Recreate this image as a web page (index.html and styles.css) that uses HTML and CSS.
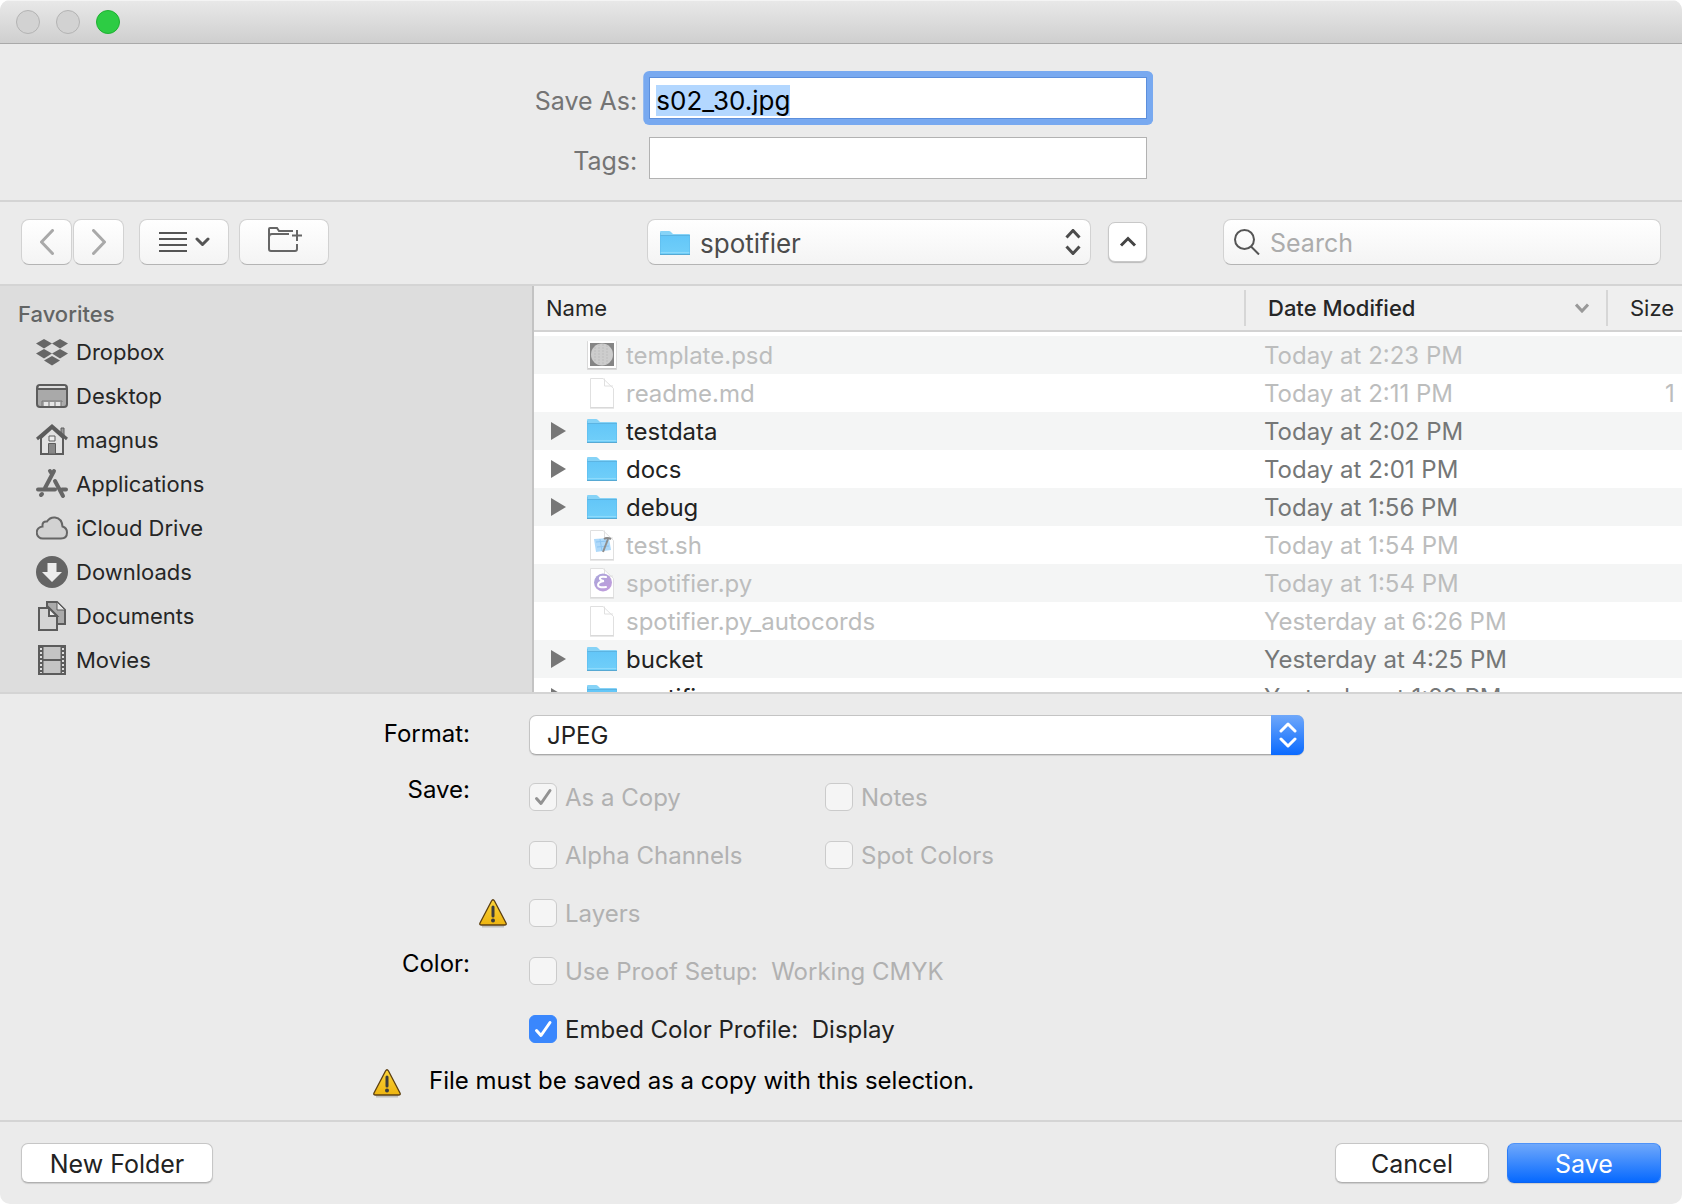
FILE: index.html
```html
<!DOCTYPE html>
<html lang="en">
<head>
<meta charset="utf-8">
<title>Save As</title>
<link rel="stylesheet" href="styles.css">
</head>
<body>
<svg class="sprite" aria-hidden="true">
  <defs>
    <linearGradient id="folder-fill" x1="0" y1="0" x2="0" y2="1"><stop offset="0" stop-color="#63c6f8"/><stop offset="1" stop-color="#71cff9"/></linearGradient>
    <linearGradient id="warn-fill" x1="0" y1="0" x2="0" y2="1"><stop offset="0" stop-color="#fbd43a"/><stop offset="1" stop-color="#edb410"/></linearGradient>
    <linearGradient id="emacs-fill" x1="0" y1="0" x2="1" y2="1"><stop offset="0" stop-color="#a9a6da"/><stop offset="1" stop-color="#c39bdc"/></linearGradient>
  </defs>
  <symbol id="folder" viewBox="0 0 32 32">
    <path d="M1 27V5q0-1 1-1h8q1 0 2 1l2 2h16q1 0 1 1v19z" fill="#86d3f7"/>
    <path d="M1 8.500h30V27q0 1-1 1H2q-1 0-1-1z" fill="url(#folder-fill)"/>
    <path d="M1 8.500h30" stroke="#5cb4e2"/><path d="M1 25.500h30" stroke="#8ddafb"/><path d="M1 27.500h30" stroke="#57a9d3"/>
    <path d="M1.500 6v21M30.500 9v18" stroke="#5fbdec" stroke-opacity=".6"/>
  </symbol>
  <symbol id="doc" viewBox="0 0 32 32">
    <path d="M4.500 1.500H17l10.500 10V30.500h-23z" fill="#fff" stroke="#e0e0e0"/>
    <path d="M18.500 1.500v7.500h8.500" fill="none" stroke="#e0e0e0"/>
    <path d="M4 31h24" stroke="#d2d2d2"/>
  </symbol>
  <symbol id="psd" viewBox="0 0 32 32">
    <path d="M1.500 2.500h29v28h-29z" fill="#ccc" stroke="#d9d9d9"/><path d="M2 2h28v27H2z" fill="#fff"/><path d="M4 4h24v23H4z" fill="#858585"/>
    <circle cx="16" cy="15.500" r="11" fill="#cdcdcd"/>
    <path d="M9 8v15M13 5v21M17 5v21M21 6v19" stroke="#bdbdbd" stroke-dasharray="2 1"/>
  </symbol>
  <symbol id="shell" viewBox="0 0 32 32">
    <use href="#doc"/>
    <path d="M8 10l15-1 2 12-15 2z" fill="#aed9fa"/><path d="M10 13l12-1M11 18l12-1M14 10l2 12" stroke="#8cc5f3" fill="none"/>
    <path d="M22 10l-5 13" stroke="#8e8e8e" stroke-width="2"/><path d="M18 10q3-2 7 0" stroke="#888" stroke-width="2" fill="none"/>
  </symbol>
  <symbol id="emacs" viewBox="0 0 32 32">
    <use href="#doc"/>
    <circle cx="17" cy="15.500" r="9" fill="url(#emacs-fill)"/>
    <path d="M20 10q-7-1-6 2 1 2 4 2-6 1-6 4 0 3 8 2" fill="none" stroke="#fff" stroke-width="2" stroke-linecap="round"/>
  </symbol>
  <symbol id="warning" viewBox="0 0 28 30">
    <path d="M3 28.500h22" stroke="#000" stroke-opacity=".18" stroke-width="2"/>
    <path d="M12.500 3q1.500-2.500 3 0L27 25q.8 2-1.500 2h-23q-2.300 0-1.500-2z" fill="url(#warn-fill)" stroke="#5c3f10" stroke-width="1.300"/>
    <path d="M14 9v9" stroke="#3c3c3c" stroke-width="3" stroke-linecap="round"/><circle cx="14" cy="22.500" r="2" fill="#3c3c3c"/>
  </symbol>
</svg>

<header class="titlebar">
  <button class="light" aria-label="Close" disabled></button>
  <button class="light" aria-label="Minimize" disabled></button>
  <button class="light light-zoom" aria-label="Zoom"></button>
</header>

<section class="naming">
  <label for="filename">Save As:</label>
  <input id="filename" class="field field-focus" type="text" value="s02_30.jpg" autofocus>
  <label for="tags">Tags:</label>
  <input id="tags" class="field" type="text">
</section>

<nav class="toolbar">
  <div class="tools">
    <div class="history">
      <button class="tool tool-nav" aria-label="Back"><svg width="14" height="26" viewBox="0 0 14 26"><path d="M12.500 1.500L1.500 13l11 11.500"/></svg></button>
      <button class="tool tool-nav" aria-label="Forward"><svg width="14" height="26" viewBox="0 0 14 26"><path d="M1.500 1.500L12.500 13l-11 11.500"/></svg></button>
    </div>
    <button class="tool tool-wide" aria-label="View as list">
      <svg width="52" height="24" viewBox="0 0 52 24"><path d="M1 3h28M1 9h28M1 15h28M1 21h28" stroke-width="2"/><path d="M39 9l5.500 5.500L50 9" stroke-width="3" stroke-linecap="round" stroke-linejoin="round"/></svg>
    </button>
    <button class="tool tool-wide" aria-label="New folder">
      <svg class="new-folder" width="36" height="28" viewBox="0 0 36 28"><path d="M27 5H13l-2-3H4Q3 2 3 3v20q0 2 2 2h24q2 0 2-2v-5M3 11q0-3 3-3h17"/><path d="M31 4v11M26 9.500h10"/></svg>
    </button>
  </div>
  <div class="location">
    <div class="picker">
      <svg class="picker-folder" width="32" height="32"><use href="#folder"/></svg>
      <select class="picker-select" aria-label="Location"><option>spotifier</option></select>
      <svg class="picker-arrows" width="16" height="26" viewBox="0 0 16 26"><path d="M1.500 8.500L8 1.500l6.500 7M1.500 17.500L8 24.500l6.500-7"/></svg>
    </div>
    <button class="collapse" aria-label="Collapse"><svg width="18" height="12" viewBox="0 0 18 12"><path d="M2 9.500L9 2.500l7 7"/></svg></button>
  </div>
  <label class="search">
    <svg width="26" height="26" viewBox="0 0 26 26"><circle cx="10.500" cy="10.500" r="9.500"/><path d="M17 17.500l8 8"/></svg>
    <input type="search" placeholder="Search" aria-label="Search">
  </label>
</nav>

<main class="browser">
  <aside class="sidebar">
    <h2>Favorites</h2>
    <ul>
      <li><a href="#dropbox"><svg viewBox="0 0 32 32"><path d="M8 3l8 4.500-8 5-8-5zM24 3l8 4.500-8 5-8-5zM8 13l8 4.500-8 5-8-5zM24 13l8 4.500-8 5-8-5zM16 20l8 4.500-8 5-8-5z" fill="#666"/></svg>Dropbox</a></li>
      <li><a href="#desktop"><svg viewBox="0 0 32 32"><rect x="1" y="5" width="30" height="22" rx="3" fill="#a9a9a9" stroke="#5c5c5c" stroke-width="2"/><path d="M3 7h26" stroke="#ddd" stroke-width="2"/><path d="M1 9h30" stroke="#5c5c5c" stroke-width="2"/><path d="M8 24h19" stroke="#e6e6e6" stroke-width="4" stroke-dasharray="4 2"/><path d="M6 26v-5h20v5" fill="none" stroke="#777"/></svg>Desktop</a></li>
      <li><a href="#home"><svg viewBox="0 0 32 32"><path d="M25 9V4h3v8" fill="#999" stroke="#5c5c5c"/><path d="M5 14v16h22V14L16 4z" fill="#e2e2e2" stroke="#5c5c5c" stroke-width="2"/><path d="M1 15L16 2l15 13" fill="none" stroke="#5c5c5c" stroke-width="3"/><path d="M13 12h6v5h-6z" fill="#eee" stroke="#5c5c5c"/><path d="M12.500 19.500h7V30h-7z" fill="#888" stroke="#5c5c5c"/></svg>magnus</a></li>
      <li><a href="#applications"><svg viewBox="0 0 32 32"><g fill="none" stroke="#666" stroke-width="4" stroke-linecap="round"><path d="M18 3l-9 17M2 21.500h17M26 21.500h4M14 3l2 3M19 13l8 15M5 27l1-1"/></g></svg>Applications</a></li>
      <li><a href="#icloud"><svg viewBox="0 0 32 32"><path d="M7 26.500a6 6 0 0 1-.5-12Q6 9 11 9.500 14 5 19 5.500q7 1 7.500 9 4.500 1.500 4.500 6 0 6-6 6z" fill="#d2d2d2" stroke="#666" stroke-width="2"/></svg>iCloud Drive</a></li>
      <li><a href="#downloads"><svg viewBox="0 0 32 32"><circle cx="16" cy="16" r="16" fill="#646464"/><path d="M11.500 7h9v9H26L16 26 6 16h5.500z" fill="#ececec"/></svg>Downloads</a></li>
      <li><a href="#documents"><svg viewBox="0 0 32 32"><path d="M11 2h10l8 8v14H11z" fill="#aaa" stroke="#5c5c5c" stroke-width="2"/><path d="M21 2v8h8z" fill="#e6e6e6" stroke="#5c5c5c" stroke-width="1"/><path d="M3 8h10l8 8v14H3z" fill="#d4d4d4" stroke="#5c5c5c" stroke-width="2"/><path d="M13 8v8h8z" fill="#eee" stroke="#5c5c5c" stroke-width="2"/></svg>Documents</a></li>
      <li><a href="#movies"><svg viewBox="0 0 32 32"><path d="M3 2h26v28H3z" fill="#c4c4c4" stroke="#5c5c5c" stroke-width="2"/><path d="M5 3v26M27 3v26" stroke="#5c5c5c" stroke-width="5"/><path d="M5 4v25M27 4v25" stroke="#ddd" stroke-width="2" stroke-dasharray="2 2"/><path d="M6 16h20" stroke="#5c5c5c" stroke-width="2"/></svg>Movies</a></li>
    </ul>
  </aside>
  <div class="files">
    <table>
      <colgroup><col class="col-name"><col class="col-date"><col class="col-size"></colgroup>
      <thead>
        <tr>
          <th scope="col"><span class="head">Name</span></th>
          <th scope="col" aria-sort="descending"><span class="head head-sorted">Date Modified<svg width="14" height="10" viewBox="0 0 14 10"><path d="M1 1.500l6 6.500 6-6.500"/></svg></span></th>
          <th scope="col"><span class="head">Size</span></th>
        </tr>
      </thead>
      <tbody>
        <tr class="dim"><td><div class="entry"><svg class="glyph"><use href="#psd"/></svg>template.psd</div></td><td>Today at 2:23 PM</td><td></td></tr>
        <tr class="dim"><td><div class="entry"><svg class="glyph"><use href="#doc"/></svg>readme.md</div></td><td>Today at 2:11 PM</td><td>1 118 bytes</td></tr>
        <tr><td><div class="entry"><button class="expand" aria-label="Expand testdata"></button><svg class="glyph"><use href="#folder"/></svg>testdata</div></td><td>Today at 2:02 PM</td><td></td></tr>
        <tr><td><div class="entry"><button class="expand" aria-label="Expand docs"></button><svg class="glyph"><use href="#folder"/></svg>docs</div></td><td>Today at 2:01 PM</td><td></td></tr>
        <tr><td><div class="entry"><button class="expand" aria-label="Expand debug"></button><svg class="glyph"><use href="#folder"/></svg>debug</div></td><td>Today at 1:56 PM</td><td></td></tr>
        <tr class="dim"><td><div class="entry"><svg class="glyph"><use href="#shell"/></svg>test.sh</div></td><td>Today at 1:54 PM</td><td>118 bytes</td></tr>
        <tr class="dim"><td><div class="entry"><svg class="glyph"><use href="#emacs"/></svg>spotifier.py</div></td><td>Today at 1:54 PM</td><td></td></tr>
        <tr class="dim"><td><div class="entry"><svg class="glyph"><use href="#doc"/></svg>spotifier.py_autocords</div></td><td>Yesterday at 6:26 PM</td><td></td></tr>
        <tr><td><div class="entry"><button class="expand" aria-label="Expand bucket"></button><svg class="glyph"><use href="#folder"/></svg>bucket</div></td><td>Yesterday at 4:25 PM</td><td></td></tr>
        <tr><td><div class="entry"><button class="expand" aria-label="Expand spotifier"></button><svg class="glyph"><use href="#folder"/></svg>spotifier</div></td><td>Yesterday at 1:28 PM</td><td></td></tr>
      </tbody>
    </table>
  </div>
</main>

<section class="options">
  <div class="option-row format-row">
    <label class="caption" for="format">Format:</label>
    <div class="format">
      <select id="format"><option>JPEG</option></select>
      <span class="format-arrows"><svg width="18" height="26" viewBox="0 0 18 26"><path d="M2 9l7-7 7 7M2 17l7 7 7-7"/></svg></span>
    </div>
  </div>
  <fieldset class="option-row">
    <legend class="caption">Save:</legend>
    <div class="checks">
      <label class="check"><input type="checkbox" checked disabled>As a Copy</label>
      <label class="check"><input type="checkbox" disabled>Notes</label>
      <label class="check"><input type="checkbox" disabled>Alpha Channels</label>
      <label class="check"><input type="checkbox" disabled>Spot Colors</label>
      <label class="check"><svg class="layers-warning" width="28" height="30"><use href="#warning"/></svg><input type="checkbox" disabled>Layers</label>
    </div>
  </fieldset>
  <fieldset class="option-row">
    <legend class="caption">Color:</legend>
    <div class="checks checks-single">
      <label class="check"><input type="checkbox" disabled>Use Proof Setup:&nbsp; Working CMYK</label>
      <label class="check"><input type="checkbox" checked>Embed Color Profile:&nbsp; Display</label>
    </div>
  </fieldset>
  <p class="notice"><svg width="28" height="30"><use href="#warning"/></svg>File must be saved as a copy with this selection.</p>
</section>

<footer class="actions">
  <button class="push push-new">New Folder</button>
  <button class="push">Cancel</button>
  <button class="push push-default">Save</button>
</footer>
<script>
  const filename = document.getElementById('filename');
  filename.focus();
  filename.select();
</script>
</body>
</html>
```
FILE: styles.css
```css
* { box-sizing: border-box; }

html { background: #fff; }

body {
  margin: 0;
  height: 100vh;
  display: flex;
  flex-direction: column;
  overflow: hidden;
  border-radius: 10px;
  background: #ebebeb;
  color: #000;
  font-family: Inter, "Liberation Sans", sans-serif;
  font-size: 24px;
}

button, input, select { font: inherit; margin: 0; color: inherit; }
button { padding: 0; }
svg { flex: none; fill: none; }
.sprite { position: absolute; width: 0; height: 0; }

/* Title bar */
.titlebar {
  flex: none;
  display: flex;
  align-items: center;
  gap: 16px;
  height: 44px;
  padding-left: 16px;
  background: linear-gradient(#e8e8e8, #cfcfcf);
  border-top: 1px solid #f4f4f4;
  border-bottom: 1px solid #a9a9a9;
}
.light {
  width: 24px;
  height: 24px;
  border: 1px solid #b3b3b3;
  border-radius: 50%;
  background: #d2d2d2;
}
.light-zoom { background: #2dcc44; border-color: #1fb032; }

/* File name and tags */
.naming {
  flex: none;
  display: grid;
  grid-template-columns: auto minmax(0, 498px);
  justify-content: center;
  align-items: center;
  column-gap: 12px;
  row-gap: 18px;
  padding: 33px 0 21px;
  border-bottom: 2px solid #d4d4d4;
}
.naming label {
  padding-top: 5px;
  text-align: right;
  color: #747474;
  font-size: 25px;
}
.field {
  width: 100%;
  height: 42px;
  padding: 4px 6px 0;
  border: 1px solid #b2b2b2;
  border-radius: 0;
  outline: 0;
  background: #fff;
  color: #000;
  font-size: 26px;
}
.field-focus {
  border-color: #5c8fdc;
  box-shadow: 0 0 0 6px #78a9f0;
  clip-path: inset(-6px round 6px);
}
.field::selection { background: #b3d7ff; color: #000; }

/* Toolbar */
.toolbar {
  flex: none;
  display: grid;
  grid-template-columns: minmax(0, 626fr) minmax(0, 500fr) minmax(0, 514fr);
  align-items: center;
  padding: 17px 21px 19px;
  border-bottom: 2px solid #d4d4d4;
}
.tools { display: flex; gap: 10px; }
.history { display: flex; gap: 1px; margin-right: 5px; }
.tool, .picker-select, .search {
  height: 46px;
  border: 1px solid #d2d2d2;
  border-bottom-color: #b4b4b4;
  border-radius: 8px;
  background: linear-gradient(#fff, #f4f4f4);
}
.tool {
  display: flex;
  align-items: center;
  justify-content: center;
}
.tool svg { stroke: #555; }
.tool-nav { width: 51px; }
.tool-nav svg { stroke: #a9a9a9; stroke-width: 3; stroke-linecap: round; stroke-linejoin: round; }
.tool-wide { width: 90px; }
.tool .new-folder { stroke: #666; stroke-width: 2; margin-bottom: 4px; }
.location { display: flex; align-items: center; gap: 17px; }
.picker { position: relative; flex: 1; }
.picker-select {
  appearance: none;
  display: block;
  width: 100%;
  padding: 2px 48px 0 52px;
  outline: 0;
  color: #4c4c4c;
  font-size: 26px;
}
.picker-folder { position: absolute; left: 12px; top: 8px; }
.picker-arrows { position: absolute; right: 10px; top: 10px; stroke: #4c4c4c; stroke-width: 3; }
.collapse {
  display: flex;
  align-items: center;
  justify-content: center;
  width: 39px;
  height: 40px;
  border: 1px solid #c8c8c8;
  border-radius: 7px;
  background: #fff;
  box-shadow: 0 1px 1px #bbb;
}
.collapse svg { stroke: #444; stroke-width: 3; }
.search {
  display: flex;
  align-items: center;
  gap: 10px;
  margin-left: 76px;
  padding: 0 10px;
}
.search svg { stroke: #555; stroke-width: 2; }
.search input {
  appearance: none;
  flex: 1;
  min-width: 0;
  padding: 2px 0 0;
  border: 0;
  outline: 0;
  background: none;
  font-size: 25px;
}
.search input::placeholder { color: #acacac; }

/* Sidebar */
.browser {
  flex: 1 1 0;
  min-height: 0;
  display: flex;
  border-bottom: 2px solid #d4d4d4;
}
.sidebar {
  flex: none;
  width: 534px;
  padding: 14px 0 0 18px;
  overflow: hidden;
  border-right: 2px solid #c3c3c3;
  background: #ddd;
}
.sidebar h2 {
  margin: 0 0 2px;
  color: #626464;
  font-size: 22px;
  font-weight: 500;
  line-height: 28px;
}
.sidebar ul { margin: 0; padding: 0; list-style: none; }
.sidebar a {
  display: flex;
  align-items: center;
  gap: 8px;
  height: 44px;
  padding-left: 18px;
  color: #262626;
  font-size: 22px;
  text-decoration: none;
}
.sidebar svg { width: 32px; height: 32px; }

/* File list: the table runs on past the right edge of its pane */
.files { flex: 1; min-width: 0; overflow: hidden; background: #fff; }
table {
  width: calc(100% + 136px);
  border-collapse: collapse;
  table-layout: fixed;
}
.col-date { width: 362px; }
.col-size { width: 212px; }
th {
  height: 45px;
  padding: 0;
  border-bottom: 2px solid #d2d2d2;
  background: #efefef;
  color: #262626;
  font-size: 22px;
  font-weight: 400;
  text-align: left;
}
.head {
  display: flex;
  align-items: center;
  height: 36px;
  padding-left: 12px;
}
th + th .head { padding-left: 22px; border-left: 2px solid #d6d6d6; }
.head.head-sorted { justify-content: space-between; padding-right: 17px; font-weight: 500; }
.head svg { stroke: #999; stroke-width: 3; }
tbody::before { content: ""; display: block; height: 4px; }
td {
  height: 38px;
  padding: 0;
  white-space: nowrap;
  color: #757777;
}
td:nth-child(2) { padding-left: 20px; }
td:nth-child(3) { padding-right: 33px; text-align: right; }
tbody tr:nth-child(odd) { background: #f4f5f5; }
.entry {
  display: flex;
  align-items: center;
  gap: 8px;
  height: 38px;
  padding-left: 52px;
  color: #222;
}
.entry:has(.expand) { padding-left: 17px; }
.expand {
  width: 15px;
  height: 18px;
  margin-right: 12px;
  border: 0;
  background: #777;
  clip-path: polygon(0 0, 100% 50%, 0 100%);
}
.glyph { width: 32px; height: 32px; }
.dim td, .dim .entry { color: #bcbdbd; }

/* Format and save options */
.options { flex: none; padding: 21px 0 22px; }
.option-row {
  display: flex;
  gap: 59px;
  align-items: flex-start;
  margin: 0;
  padding: 0;
  border: 0;
}
.caption {
  flex: none;
  width: 470px;
  padding: 0;
  text-align: right;
  line-height: 44px;
}
legend.caption { float: left; }
.format-row { margin-bottom: 13px; }
.format-row .caption { line-height: 38px; }
.format { position: relative; flex: 0 1 775px; }
.format select {
  appearance: none;
  display: block;
  width: 100%;
  height: 40px;
  padding: 0 50px 0 17px;
  border: 1px solid #c4c4c4;
  border-bottom-color: #aaa;
  border-radius: 7px;
  outline: 0;
  background: #fff;
  box-shadow: 0 1px 1px #d0d0d0;
  color: #222;
}
.format-arrows {
  position: absolute;
  top: 0;
  right: 0;
  display: flex;
  align-items: center;
  justify-content: center;
  width: 33px;
  height: 40px;
  border-radius: 0 7px 7px 0;
  background: linear-gradient(#6fa8fa, #0a6aff);
  pointer-events: none;
}
.format-arrows svg { stroke: #fff; stroke-width: 3; stroke-linecap: round; stroke-linejoin: round; }
.checks {
  display: grid;
  grid-template-columns: 296px auto;
}
.checks-single { grid-template-columns: auto; }
.check {
  position: relative;
  display: flex;
  align-items: center;
  gap: 8px;
  height: 58px;
  color: #222;
}
.check:has(:disabled) { color: #b1b1b1; }
.check input {
  appearance: none;
  flex: none;
  width: 28px;
  height: 28px;
  border: 1px solid #cbcbcb;
  border-radius: 6px;
  background: #f5f5f5 center / 28px 28px no-repeat;
}
.check input:checked { background-image: url("data:image/svg+xml,%3Csvg xmlns='http://www.w3.org/2000/svg' viewBox='0 0 28 28'%3E%3Cpath d='M7.500 15.500l4.500 5L21 7.500' fill='none' stroke='%23929292' stroke-width='3' stroke-linecap='round' stroke-linejoin='round'/%3E%3C/svg%3E"); }
.check input:checked:enabled {
  border-color: #3a87fd;
  background-color: #3a87fd;
  background-image: url("data:image/svg+xml,%3Csvg xmlns='http://www.w3.org/2000/svg' viewBox='0 0 28 28'%3E%3Cpath d='M7.500 15.500l4.500 5L21 7.500' fill='none' stroke='white' stroke-width='3' stroke-linecap='round' stroke-linejoin='round'/%3E%3C/svg%3E");
}
.layers-warning { position: absolute; left: -50px; }
.notice {
  display: flex;
  align-items: center;
  gap: 28px;
  margin: 4px 0 0;
  padding-left: 373px;
}
.notice svg { margin-top: 6px; }

/* Buttons */
.actions {
  flex: none;
  display: flex;
  gap: 18px;
  padding: 21px;
  border-top: 2px solid #d4d4d4;
}
.push {
  width: 154px;
  height: 40px;
  padding-top: 2px;
  border: 1px solid #c6c6c6;
  border-bottom-color: #b0b0b0;
  border-radius: 7px;
  background: #fff;
  box-shadow: 0 1px 1px #ccc;
  color: #222;
  font-size: 25px;
}
.push-new { width: 192px; margin-right: auto; }
.push-default {
  border-color: #4f93f8 #2a7cf8 #0a63f0;
  background: linear-gradient(#6fa8fb, #0669ff);
  color: #fff;
}
```
